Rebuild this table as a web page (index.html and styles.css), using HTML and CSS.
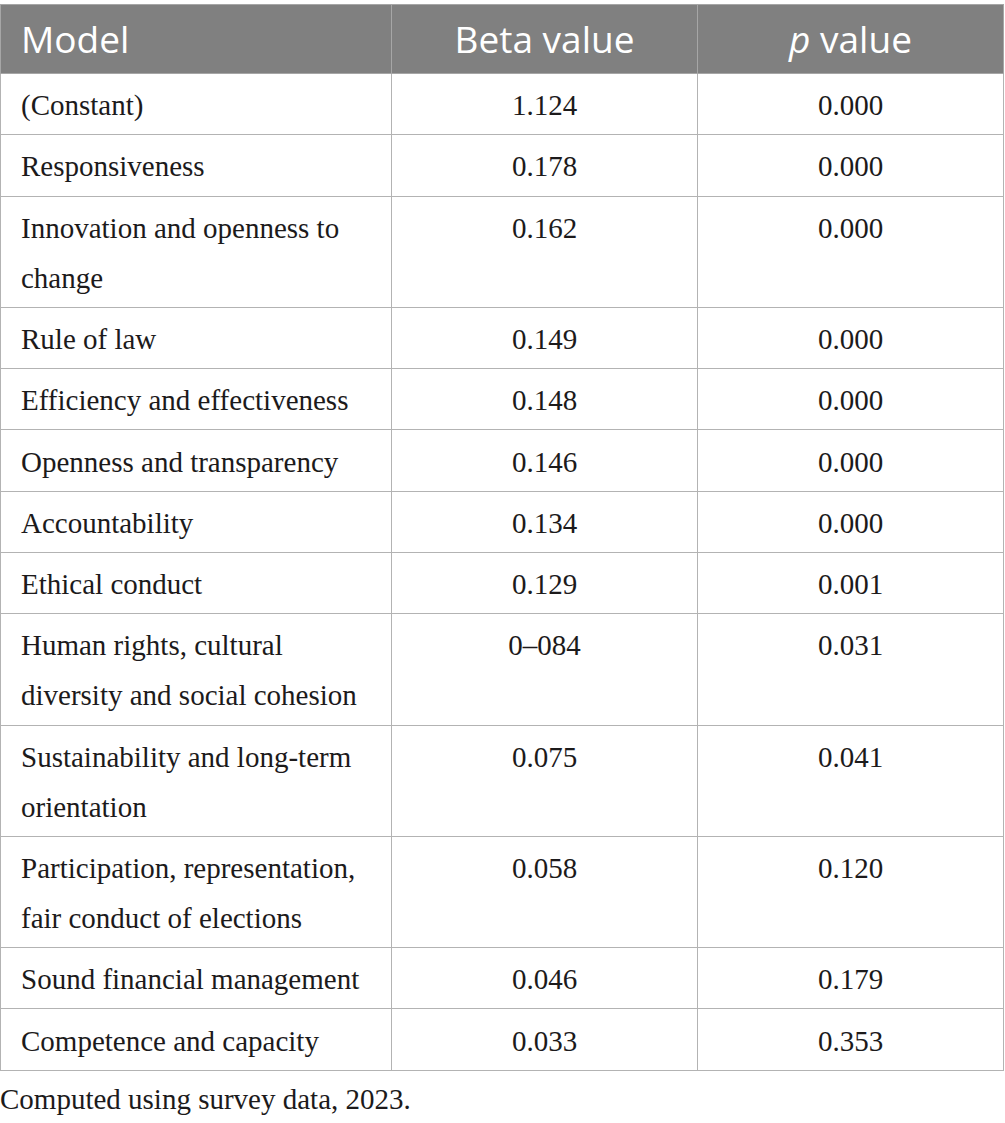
FILE: index.html
```html
<!DOCTYPE html>
<html lang="en">
<head>
  <meta charset="UTF-8">
  <title>Regression coefficients</title>
  <link rel="stylesheet" href="styles.css">
</head>
<body>
  <table class="data-table">
    <thead>
      <tr>
        <th class="col-model">Model</th>
        <th class="col-num">Beta value</th>
        <th class="col-num"><i>p</i> value</th>
      </tr>
    </thead>
    <tbody>
      <tr><td>(Constant)</td><td class="num">1.124</td><td class="num">0.000</td></tr>
      <tr><td>Responsiveness</td><td class="num">0.178</td><td class="num">0.000</td></tr>
      <tr><td>Innovation and openness to change</td><td class="num">0.162</td><td class="num">0.000</td></tr>
      <tr><td>Rule of law</td><td class="num">0.149</td><td class="num">0.000</td></tr>
      <tr><td>Efficiency and effectiveness</td><td class="num">0.148</td><td class="num">0.000</td></tr>
      <tr><td>Openness and transparency</td><td class="num">0.146</td><td class="num">0.000</td></tr>
      <tr><td>Accountability</td><td class="num">0.134</td><td class="num">0.000</td></tr>
      <tr><td>Ethical conduct</td><td class="num">0.129</td><td class="num">0.001</td></tr>
      <tr><td>Human rights, cultural diversity and social cohesion</td><td class="num">0&#8211;084</td><td class="num">0.031</td></tr>
      <tr><td>Sustainability and long-term orientation</td><td class="num">0.075</td><td class="num">0.041</td></tr>
      <tr><td>Participation, representation, fair conduct of elections</td><td class="num">0.058</td><td class="num">0.120</td></tr>
      <tr><td>Sound financial management</td><td class="num">0.046</td><td class="num">0.179</td></tr>
      <tr><td>Competence and capacity</td><td class="num">0.033</td><td class="num">0.353</td></tr>
    </tbody>
  </table>
  <p class="table-note">Computed using survey data, 2023.</p>
</body>
</html>
```

FILE: styles.css
```css
body {
  margin: 0;
  padding: 4px 0 0;
  font-family: "Liberation Serif", "Times New Roman", serif;
  color: #1c1a1b;
  background: #fff;
}
/* Tabla principal */
.data-table {
  width: 1004px;
  border-collapse: collapse;
  table-layout: fixed;
}
.data-table th {
  background-color: #808080;
  color: #fff;
  font-family: "Open Sans", sans-serif;
  font-weight: 400;
  font-size: 37px;
  line-height: 50px;
  padding: 9px 20px 9px;
  border: 1px solid #a6a6a6;
  text-align: center;
}
.data-table th.col-model {
  width: 350px;
  text-align: left;
}
.data-table td {
  font-size: 29px;
  line-height: 50px;
  padding: 6.2px 20px 4.1px;
  border: 1px solid #b3b3b3;
  vertical-align: top;
  text-align: left;
}
.data-table td.num {
  text-align: center;
}
/* Nota al pie */
.table-note {
  margin: 8px 0 0;
  font-size: 29px;
  line-height: 40px;
}
```
